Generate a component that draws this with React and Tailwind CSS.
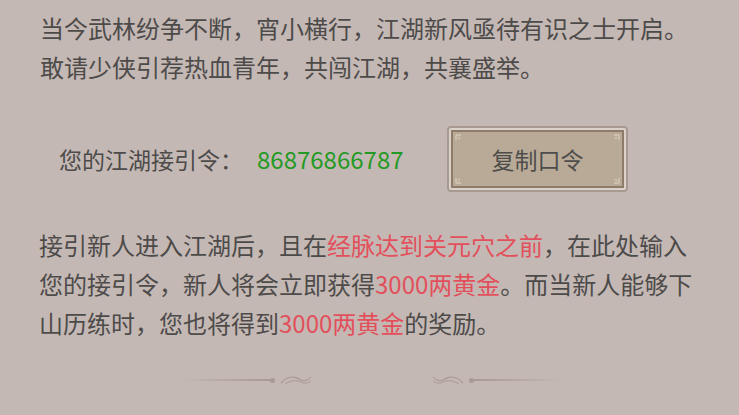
import React from 'react'

const font = { fontFamily: '"Noto Sans CJK SC", "Noto Sans", sans-serif' }

function Corner({ className }) {
  return (
    <svg width="10" height="10" viewBox="0 0 10 10" className={`absolute ${className}`} aria-hidden>
      <path d="M1 1 L6 1 M1 1 L1 6 M3 3 L5 5" stroke="#d3c7b4" strokeWidth="1.4" fill="none" />
    </svg>
  )
}

function Swirl({ flip }) {
  return (
    <svg width="34" height="14" viewBox="0 0 34 14" className={flip ? '-scale-x-100' : ''} aria-hidden>
      <path d="M2 10 C8 3 16 3 20 6 C24 9 29 8 32 4" stroke="#a89a95" strokeWidth="1.2" fill="none" />
      <path d="M6 11 C12 7 18 7 22 9 C26 11 30 10 32 8" stroke="#a89a95" strokeWidth="1" fill="none" />
    </svg>
  )
}

export default function App() {
  return (
    <div className="w-[739px] h-[415px] bg-[#c4b8b4] text-[#4d4b4a] overflow-hidden" style={font}>
      <div className="pl-[40px] pt-[8px] text-[24px] leading-[39px]">
        <p>当今武林纷争不断，宵小横行，江湖新风亟待有识之士开启。</p>
        <p>敢请少侠引荐热血青年，共闯江湖，共襄盛举。</p>
      </div>

      <div className="flex items-center mt-[40px] pl-[59px]">
        <span className="text-[23px] w-[198px]">您的江湖接引令：</span>
        <span className="text-[24px] text-[#249a24] w-[190px]">86876866787</span>
        <button
          type="button"
          className="w-[181px] h-[66px] rounded-[4px] border-2 border-[#a89a90] bg-[#dad1cb] p-[2px]"
        >
          <div className="relative w-full h-full border-2 border-[#8e7c68] bg-[#b8aa96] flex items-center justify-center text-[23px] text-[#4f4d4c]">
            <Corner className="top-[2px] left-[2px]" />
            <Corner className="top-[2px] right-[2px] -scale-x-100" />
            <Corner className="bottom-[2px] left-[2px] -scale-y-100" />
            <Corner className="bottom-[2px] right-[2px] -scale-100" />
            复制口令
          </div>
        </button>
      </div>

      <div className="pl-[39px] pr-[20px] mt-[33px] text-[24px] leading-[39px]">
        <p>
          接引新人进入江湖后，且在<span className="text-[#e2505c]">经脉达到关元穴之前</span>，在此处输入
        </p>
        <p>
          您的接引令，新人将会立即获得<span className="text-[#e2505c]">3000两黄金</span>。而当新人能够下
        </p>
        <p>
          山历练时，您也将得到<span className="text-[#e2505c]">3000两黄金</span>的奖励。
        </p>
      </div>

      <div className="flex items-center justify-center gap-[118px] mt-[31px] pl-[4px]">
        <div className="flex items-center">
          <div className="w-[88px] h-[2px] bg-gradient-to-r from-transparent to-[#a89a95]" />
          <div className="w-[5px] h-[5px] rounded-full bg-[#a89a95]" />
          <div className="ml-[4px]"><Swirl /></div>
        </div>
        <div className="flex items-center">
          <div className="mr-[4px]"><Swirl flip /></div>
          <div className="w-[5px] h-[5px] rounded-full bg-[#a89a95]" />
          <div className="w-[88px] h-[2px] bg-gradient-to-l from-transparent to-[#a89a95]" />
        </div>
      </div>
    </div>
  )
}
